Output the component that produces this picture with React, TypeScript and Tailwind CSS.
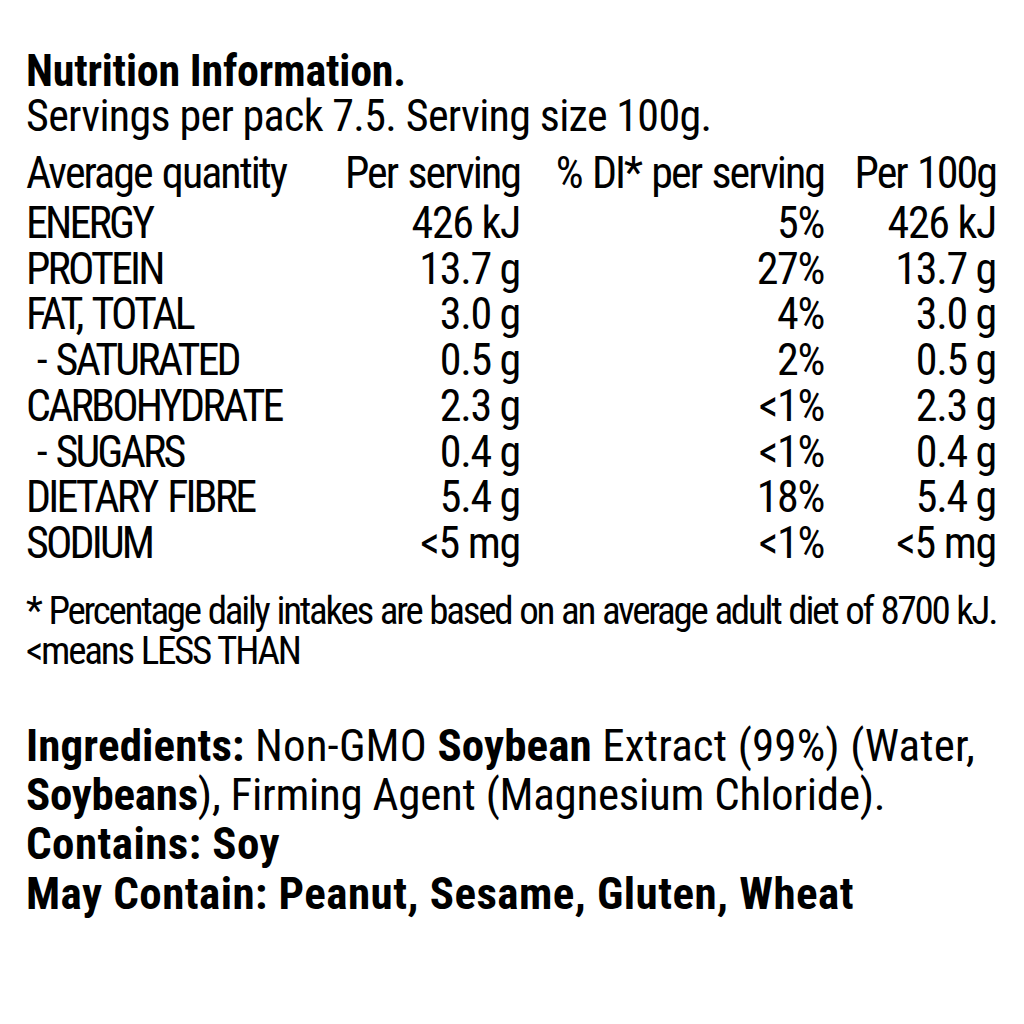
const rows = [
  { name: "ENERGY", serving: "426 kJ", di: "5%", per100: "426 kJ" },
  { name: "PROTEIN", serving: "13.7 g", di: "27%", per100: "13.7 g" },
  { name: "FAT, TOTAL", serving: "3.0 g", di: "4%", per100: "3.0 g" },
  { name: "\u00a0- SATURATED", serving: "0.5 g", di: "2%", per100: "0.5 g" },
  { name: "CARBOHYDRATE", serving: "2.3 g", di: "<1%", per100: "2.3 g" },
  { name: "\u00a0- SUGARS", serving: "0.4 g", di: "<1%", per100: "0.4 g" },
  { name: "DIETARY FIBRE", serving: "5.4 g", di: "18%", per100: "5.4 g" },
  { name: "SODIUM", serving: "<5 mg", di: "<1%", per100: "<5 mg" },
];

export default function App() {
  return (
    <div className="min-h-[1024px] w-[1024px] bg-white pl-[26px] pt-[50px] text-black font-[family-name:Roboto_Condensed,sans-serif]">
      <h1 className="text-[44px] leading-[43px] font-bold tracking-[-0.005em]">Nutrition Information.</h1>
      <p className="text-[44px] leading-[46px] tracking-[-0.015em] whitespace-nowrap">
        Servings per pack 7.5. Serving size 100g.
      </p>

      <div className="mt-[11px] grid grid-cols-[264px_230px_304px_172px] text-[44px] leading-[46px] tracking-[-0.045em] [word-spacing:0.05em] whitespace-nowrap">
        <div>Average quantity</div>
        <div className="text-right">Per serving</div>
        <div className="text-right">% DI* per serving</div>
        <div className="text-right">Per 100g</div>
      </div>

      <div className="mt-[5px] grid grid-cols-[264px_230px_304px_172px] text-[44px] leading-[45.7px] whitespace-nowrap">
        {rows.map((r) => (
          <div key={r.name} className="contents">
            <div className="whitespace-pre tracking-[-0.065em] [word-spacing:0.08em]">{r.name}</div>
            <div className="text-right tracking-[-0.03em]">{r.serving}</div>
            <div className="text-right tracking-[-0.03em]">{r.di}</div>
            <div className="text-right tracking-[-0.03em]">{r.per100}</div>
          </div>
        ))}
      </div>

      <div className="mt-[24px] text-[39px] leading-[40px] tracking-[-0.058em] [word-spacing:0.03em] whitespace-nowrap">
        <p>* Percentage daily intakes are based on an average adult diet of 8700 kJ.</p>
        <p>&lt;means LESS THAN</p>
      </div>

      <div className="mt-[50px] text-[45px] leading-[49.3px] whitespace-nowrap">
        <p className="tracking-[0.003em]">
          <span className="font-bold">Ingredients:</span> Non-GMO <span className="font-bold">Soybean</span> Extract (99%) (Water,
        </p>
        <p className="tracking-[-0.006em]">
          <span className="font-bold">Soybeans</span>), Firming Agent (Magnesium Chloride).
        </p>
        <p className="font-bold tracking-[0.01em]">Contains: Soy</p>
        <p className="font-bold tracking-[0.01em]">May Contain: Peanut, Sesame, Gluten, Wheat</p>
      </div>
    </div>
  );
}
